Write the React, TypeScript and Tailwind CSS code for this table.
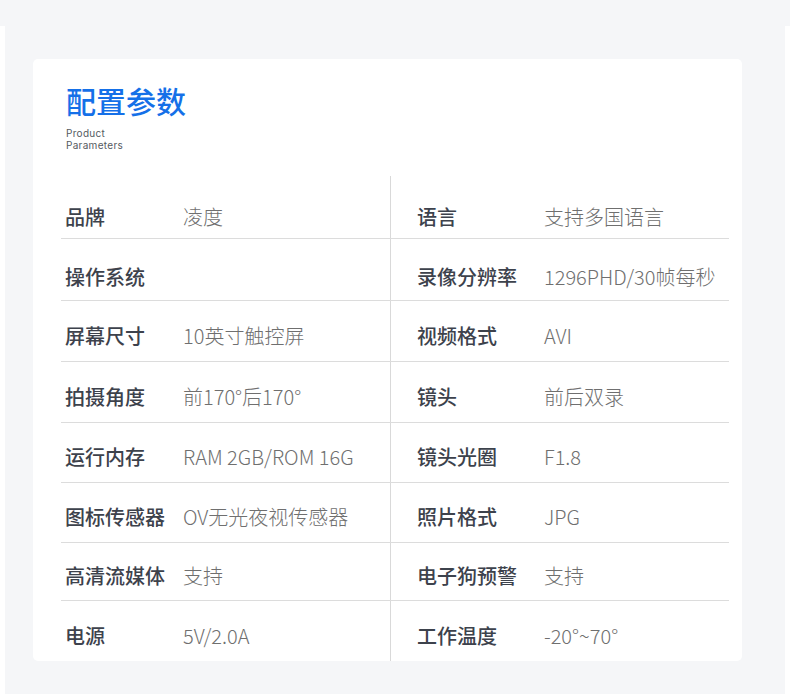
const rows: [string, string, string, string][] = [
  ["品牌", "凌度", "语言", "支持多国语言"],
  ["操作系统", "", "录像分辨率", "1296PHD/30帧每秒"],
  ["屏幕尺寸", "10英寸触控屏", "视频格式", "AVI"],
  ["拍摄角度", "前170°后170°", "镜头", "前后双录"],
  ["运行内存", "RAM 2GB/ROM 16G", "镜头光圈", "F1.8"],
  ["图标传感器", "OV无光夜视传感器", "照片格式", "JPG"],
  ["高清流媒体", "支持", "电子狗预警", "支持"],
  ["电源", "5V/2.0A", "工作温度", "-20°~70°"],
];

// row heights (incl. bottom rule) and text offsets, read off the reference
const rowH = ["h-[63px]", "h-[62px]", "h-[61px]", "h-[61px]", "h-[60px]", "h-[60px]", "h-[58px]", "h-[60px]"];
const rowPt = ["pt-[31px]", "pt-[28px]", "pt-[25px]", "pt-[25px]", "pt-[24px]", "pt-[24px]", "pt-[23px]", "pt-[25px]"];

export default function App() {
  return (
    <div className="min-h-[694px] w-[790px] bg-white font-['Noto_Sans_CJK_SC',sans-serif]">
      <div className="h-[26px] bg-[#f5f6f8]" />
      <div className="px-[5px]">
        <div className="h-[668px] bg-[#f5f6f8] pl-[28px] pr-[43px] pt-[33px]">
          {/* ===== CARD ===== */}
          <div className="rounded-[5px] bg-white pl-[28px] pr-[13px]">
            <div className="pt-[23px] pl-[5px]">
              <h1 className="text-[30px] leading-[36px] font-medium text-[#1570e8]">
                配置参数
              </h1>
              <p className="mt-[9px] font-['Inter',sans-serif] text-[10px] leading-[12px] tracking-[0.3px] text-[#555a61]">
                Product
                <br />
                Parameters
              </p>
            </div>

            <div className="mt-[25px]">
              {rows.map((r, i) => {
                const last = i === rows.length - 1;
                return (
                  <div key={i} className={`flex ${rowH[i]} ${last ? "" : "border-b border-[#dcdcdc]"}`}>
                    <div className={`flex w-[330px] border-r border-[#d9d9d9] pl-[4px] text-[20px] leading-[20px] ${rowPt[i]}`}>
                      <span className="w-[118px] shrink-0 font-medium text-[#3d424c]">{r[0]}</span>
                      <span className="font-light text-[#6f6f6f]">{r[1]}</span>
                    </div>
                    <div className={`flex flex-1 pl-[26px] text-[20px] leading-[20px] ${rowPt[i]}`}>
                      <span className="w-[127px] shrink-0 font-medium text-[#3d424c]">{r[2]}</span>
                      <span className="font-light text-[#6f6f6f]">{r[3]}</span>
                    </div>
                  </div>
                );
              })}
            </div>
          </div>
        </div>
      </div>
    </div>
  );
}
